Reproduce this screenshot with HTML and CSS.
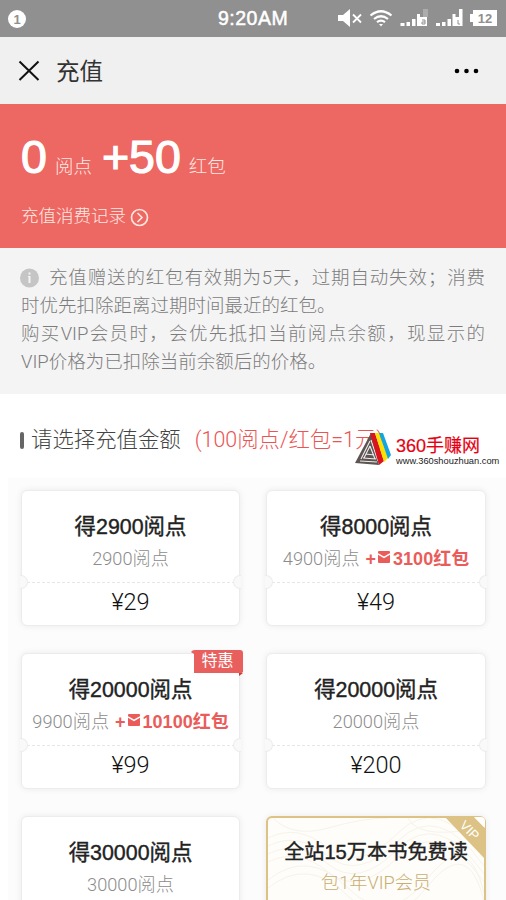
FILE: index.html
```html
<!DOCTYPE html>
<html lang="zh-CN">
<head>
<meta charset="utf-8">
<title>充值</title>
<link rel="stylesheet" href="styles.css">
</head>
<body>
<div class="screen">
  <header class="status">
    <span class="count">1</span>
    <span class="time">9:20AM</span>
    <svg class="signals" width="164" height="20" viewBox="0 0 164 20" fill="#fff">
      <path d="M0 6h5l7-6v18l-7-6H0z"/>
      <path d="M15 5.500l8 8m0-8l-8 8" fill="none" stroke="#fff" stroke-width="1.800"/>
      <g fill="none" stroke="#fff" stroke-width="2.200"><path d="M32.500 6.500q10.500-8.500 21 0M36 10q7-5.500 14 0M39 13.200q4-3 8 0"/></g>
      <path d="M41 15h4l-2 2.500z"/>
      <path d="M62.500 14h4v3h-4zM68.500 13h3.500v4h-3.500zM74 10h3.500v7H74zM79 5h3v12h-3zM82 8h7v9h-7z"/>
      <path d="M85 0h5v8h-5z" opacity=".25"/>
      <path d="M84 11h3v4h-3v-2h3" fill="none" stroke="#909090" stroke-width="1"/>
      <path d="M98 14h4v3h-4zM104 13h3.500v4H104zM109.500 10h3.500v7h-3.500zM114.500 5h3v12h-3zM117 8h4V0h3.500v17H117z"/>
      <path d="M120 11v4h2" fill="none" stroke="#909090" stroke-width="1"/>
      <path d="M135 1h24v16h-24v-4h-3V5h3z"/>
      <text class="battery" x="147" y="14" text-anchor="middle">12</text>
    </svg>
  </header>
  <nav class="nav">
    <svg width="22" height="22" viewBox="0 0 22 22"><path d="M1.500 1.500l19 18.500M20.500 1.500l-19 18.500" fill="none" stroke="#111" stroke-width="2"/></svg>
    <h1 class="nav-title">充值</h1>
    <svg class="more" width="26" height="6" viewBox="0 0 26 6"><circle cx="3" cy="3" r="2.300"/><circle cx="12.500" cy="3" r="2.300"/><circle cx="22" cy="3" r="2.300"/></svg>
  </nav>
  <section class="hero">
    <div class="balance">
      <span class="big">0</span><span class="unit">阅点</span><span class="big bonus-sum">+50</span><span class="unit">红包</span>
    </div>
    <div class="history">充值消费记录
      <svg width="19" height="19" viewBox="0 0 19 19" fill="none" stroke="#ffe4dc" stroke-width="1.700"><circle cx="9.500" cy="9.500" r="8"/><path d="M7.500 5l4.500 4.500L7.500 14"/></svg>
    </div>
  </section>
  <section class="notice">
    <div class="line first"><svg width="19" height="20" viewBox="0 0 19 20"><circle cx="9.500" cy="10" r="9.500" fill="#c5c5c5"/><path d="M8.500 4.500h2v2h-2zM8 8h2.500v7h-2V9H8z" fill="#f4f4f4"/></svg><span class="fill">充值赠送的红包有效期为5天，过期自动失效；消费</span></div>
    <div class="line">时优先扣除距离过期时间最近的红包。</div>
    <div class="line fill">购买VIP会员时，会优先抵扣当前阅点余额，现显示的</div>
    <div class="line">VIP价格为已扣除当前余额后的价格。</div>
  </section>
  <section class="choose">
    <h2 class="choose-title"><i class="bar"></i>请选择充值金额<span class="rate">(100阅点/红包=1元)</span></h2>
    <div class="watermark">
      <svg width="37" height="34" viewBox="0 0 37 34">
        <path d="M16 1L0 31l24 2z" fill="#5d5552"/>
        <path d="M15 9L6 27M15 14l-6 12M5 29l17 1M8 26l13 1M11 22l8 1M16 8l7 21M15 14l5 13" stroke="#eee" stroke-width="1.100" fill="none"/>
        <path d="M15 1h5l9 28-5 4z" fill="#d9141e"/><path d="M20 1h4l9 25-4 4z" fill="#ffe000"/><path d="M24 1h4l8 22-3 4z" fill="#13a5df"/>
      </svg>
      <div><div class="wm-name">360手赚网</div><div class="wm-url">www.360shouzhuan.com</div></div>
    </div>
  </section>
  <main class="cards">
    <article class="card">
      <div class="top"><h3>得2900阅点</h3><p>2900阅点</p></div>
      <div class="price">¥29</div>
    </article>
    <article class="card">
      <div class="top"><h3>得8000阅点</h3><p>4900阅点<b>+<svg width="12" height="12" viewBox="0 0 12 12"><path d="M1 0h10q1 0 1 1v10q0 1-1 1H1q-1 0-1-1V1q0-1 1-1z" fill="#ea5c5a"/><path d="M0 3l6 3.500L12 3" fill="none" stroke="#fff" stroke-width="1.500"/></svg>3100红包</b></p></div>
      <div class="price">¥49</div>
    </article>
    <article class="card">
      <div class="tag"><svg width="53" height="26" viewBox="0 0 53 26"><path d="M0 2Q1 0 4 0h45q3 0 3 3v19l-4 3v-2H3V4z" fill="#e95f5d"/><path d="M48 23h4l-4 3z" fill="#c63d3d"/></svg><span>特惠</span></div>
      <div class="top"><h3>得20000阅点</h3><p>9900阅点<b>+<svg width="12" height="12" viewBox="0 0 12 12"><path d="M1 0h10q1 0 1 1v10q0 1-1 1H1q-1 0-1-1V1q0-1 1-1z" fill="#ea5c5a"/><path d="M0 3l6 3.500L12 3" fill="none" stroke="#fff" stroke-width="1.500"/></svg>10100红包</b></p></div>
      <div class="price">¥99</div>
    </article>
    <article class="card">
      <div class="top"><h3>得20000阅点</h3><p>20000阅点</p></div>
      <div class="price">¥200</div>
    </article>
    <article class="card">
      <div class="top"><h3>得30000阅点</h3><p>30000阅点</p></div>
    </article>
    <article class="card vip">
      <svg class="waves" width="216" height="133" viewBox="0 0 216 133" fill="none" stroke="#f6f3e9" stroke-width="1"><path d="M0 20Q30 5 60 30T130 15T216 40M0 28Q30 13 60 38T130 23T216 48M0 36Q30 21 60 46T130 31T216 56M0 44Q30 29 60 54T130 39T216 64M0 62Q40 30 80 70T160 60T216 75M0 70Q40 38 80 78T160 68T216 83M5 0Q25 20 60 10T120 0M140 0Q150 20 200 12"/></svg>
      <svg class="ribbon" width="40" height="42" viewBox="0 0 40 42"><path d="M0 0h29l11 11v31z" fill="#dcc284"/><path d="M29 0h7q4 0 4 4v7z" fill="#fff"/><text class="vip-text" x="25" y="18" transform="rotate(45 25 13)" text-anchor="middle">VIP</text></svg>
      <div class="top"><h3>全站15万本书免费读</h3><p>包1年VIP会员</p></div>
    </article>
  </main>
</div>
</body>
</html>
```
FILE: styles.css
```css
* { box-sizing: border-box; margin: 0; padding: 0; }
body { font-family: "Liberation Sans", "Noto Sans CJK SC", sans-serif; background: #fff; }
.screen { width: 506px; height: 900px; overflow: hidden; background: #fff; }
svg { display: block; flex: none; }
.status { height: 37px; background: #909090; display: grid; grid-template-columns: 210px 128px 1fr; align-items: center; color: #fff; }
.count { width: 18px; height: 18px; margin-left: 8px; border-radius: 50%; background: #fff; color: #909090; font: bold 13px/19px "Liberation Sans", sans-serif; text-align: center; }
.time { padding-left: 8px; font-size: 19.500px; letter-spacing: .5px; -webkit-text-stroke: .5px #fff; }
.signals { margin-top: 1px; }
.battery { font: bold 13px "Liberation Sans", sans-serif; fill: #909090; }
.nav { height: 67px; background: #f0f0f0; display: flex; align-items: center; padding: 0 26px 0 18px; }
.nav-title { font-size: 23.500px; font-weight: 400; color: #333; margin: 2px 0 0 16px; line-height: 30px; }
.more { margin-left: auto; }
.hero { height: 144px; background: #ed6763; color: #fff; padding: 27px 21px 0; }
.balance { display: flex; align-items: baseline; line-height: 52px; }
.big { font-size: 46.500px; -webkit-text-stroke: 1.200px #fff; }
.unit { font-size: 18.500px; margin-left: 8px; color: #ffe9e2; font-weight: 300; }
.bonus-sum { margin-left: 10px; }
.history { display: flex; align-items: center; gap: 4px; margin-top: 9px; font-size: 17.500px; line-height: 28px; color: #ffe9e2; font-weight: 300; }
.history svg { margin-top: 3px; }
.notice { height: 146px; background: #f4f4f4; padding: 16px 21px 0; font-family: Roboto, "Noto Sans CJK SC", sans-serif; font-size: 18.500px; line-height: 28px; color: #7c7c7c; font-weight: 300; }
.line { height: 28px; white-space: nowrap; }
.first { display: flex; align-items: center; gap: 10px; }
.first svg { margin-left: -1px; }
.first .fill { flex: 1; }
.fill { text-align: justify; text-align-last: justify; }
.choose { height: 84px; padding: 31px 0 0 20px; position: relative; }
.choose-title { display: flex; align-items: center; font-family: Roboto, "Noto Sans CJK SC", sans-serif; font-size: 21.400px; line-height: 30px; font-weight: 300; color: #444; white-space: nowrap; }
.bar { width: 4px; height: 17px; border-radius: 2px; background: #666; margin-right: 7px; }
.rate { color: #ea5553; margin-left: 14px; }
.watermark { position: absolute; left: 355px; top: 38px; display: flex; gap: 4px; }
.wm-name { font: 18px/29px "Liberation Sans", "Noto Sans CJK SC", sans-serif; color: #e60012; -webkit-text-stroke: .2px #e60012; white-space: nowrap; }
.wm-url { font-size: 9.300px; line-height: 1; margin-top: -4px; color: #222; white-space: nowrap; }
.cards { margin-left: 8px; padding: 12px 20px 0 13px; height: 422px; background: #fcfcfc; display: grid; grid-template-columns: 219px 220px; grid-auto-rows: 136px; gap: 27px 26px; overflow: hidden; }
.card { position: relative; background: #fff; border: 1px solid #ececec; border-radius: 6px; box-shadow: 0 0 7px rgba(0,0,0,.07); text-align: center; white-space: nowrap; }
.top { position: relative; height: 92px; margin: 0 5px; padding-top: 21px; background: repeating-linear-gradient(90deg, #e6e6e6 0 3px, transparent 3px 5px) 0 100% / 100% 1px no-repeat; }
.top::before, .top::after { content: ""; position: absolute; width: 7px; height: 12px; bottom: -6px; background: #f9f9f9; border: 1px solid #ececec; }
.top::before { left: -7px; border-left: 0; border-radius: 0 7px 7px 0; }
.top::after { right: -7px; border-right: 0; border-radius: 7px 0 0 7px; }
h3 { font-size: 21.400px; line-height: 30px; font-weight: 400; color: #222; -webkit-text-stroke: .4px #222; }
.top p { display: flex; justify-content: center; font-family: Roboto, "Noto Sans CJK SC", sans-serif; font-size: 18.200px; line-height: 28px; margin: 3px -5px 0; color: #8c8c8c; font-weight: 300; }
.top b { display: flex; font-family: "Liberation Sans", "Noto Sans CJK SC", sans-serif; color: #ea5c5a; margin-left: 6px; font-size: 18px; font-weight: 700; }
.top b svg { margin: 6px 3px 0 2px; }
.price { font-family: Roboto, sans-serif; font-weight: 300; font-size: 23.500px; line-height: 38px; color: #111; }
.tag { position: absolute; left: 169px; top: -4px; width: 53px; height: 26px; z-index: 1; }
.tag span { position: absolute; left: 0; top: 0; width: 53px; line-height: 22px; font-size: 16px; color: #fff; }
.vip { border: 2px solid #dcc284; background: #fefdfa; }
.vip .top { margin: 0 4px; padding-top: 19px; background: none; }
.vip .top::before, .vip .top::after { display: none; }
.waves { position: absolute; left: 0; top: 0; }
.ribbon { position: absolute; right: -1px; top: -1px; }
.vip-text { font: 13px "Liberation Sans", sans-serif; fill: #fff; }
.vip h3 { font-size: 20.200px; }
.vip .top p { color: #c9ae70; margin-top: 2px; }
```
